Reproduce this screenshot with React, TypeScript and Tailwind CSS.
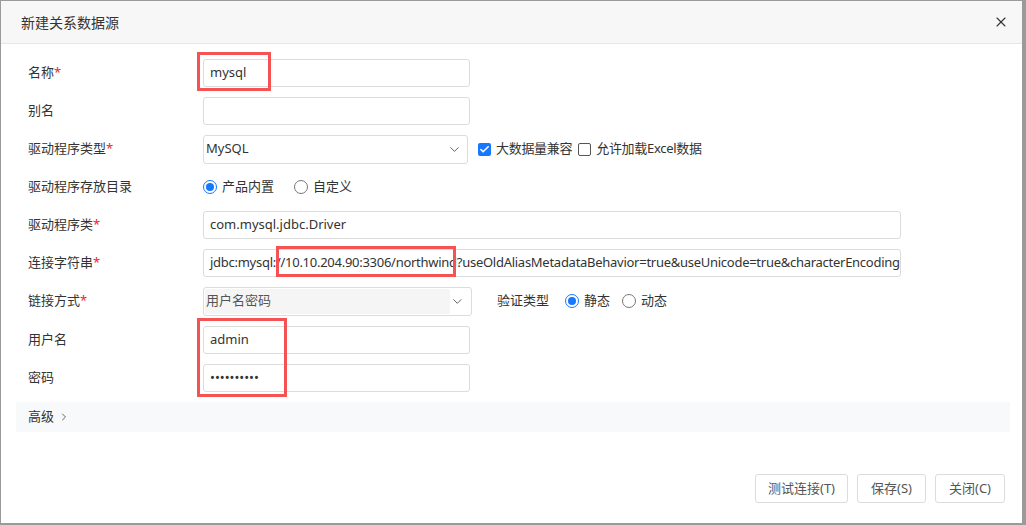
import { ChevronDown, ChevronRight, X, Check } from "lucide-react";

const font = { fontFamily: '"Noto Sans", "Noto Sans CJK SC", sans-serif' };

function Label({ text, required }: { text: string; required?: boolean }) {
  return (
    <div className="w-[187px] shrink-0 pl-[12px] text-[13px] text-[#333]">
      {text}
      {required && <span className="text-[#f5222d]">*</span>}
    </div>
  );
}

function Input({ value, className = "w-[267px]" }: { value?: string; className?: string }) {
  return (
    <div
      className={`h-[28px] ${className} flex items-center overflow-hidden whitespace-nowrap rounded-[3px] border border-[#dcdcdc] bg-white px-[6px] text-[13px] text-[#333]`}
    >
      {value}
    </div>
  );
}

function Radio({ checked, label }: { checked?: boolean; label: string }) {
  return (
    <div className="flex items-center gap-[5px] text-[13px] text-[#333]">
      <span
        className={`flex h-[14px] w-[14px] items-center justify-center rounded-full border ${
          checked ? "border-[#1677ff]" : "border-[#777]"
        } bg-white`}
      >
        {checked && <span className="h-[8px] w-[8px] rounded-full bg-[#1677ff]" />}
      </span>
      {label}
    </div>
  );
}

function Checkbox({ checked, label }: { checked?: boolean; label: string }) {
  return (
    <div className="flex items-center gap-[5px] text-[13px] tracking-[-0.3px] text-[#333]">
      <span
        className={`flex h-[13px] w-[13px] items-center justify-center rounded-[2px] ${
          checked ? "bg-[#1677ff]" : "border border-[#555] bg-white"
        }`}
      >
        {checked && <Check className="h-[11px] w-[11px] text-white" strokeWidth={3.5} />}
      </span>
      {label}
    </div>
  );
}

function Row({ children }: { children: React.ReactNode }) {
  return <div className="flex h-[38px] items-center">{children}</div>;
}

export default function App() {
  const conn =
    "jdbc:mysql://10.10.204.90:3306/northwind?useOldAliasMetadataBehavior=true&useUnicode=true&characterEncoding=utf8";

  return (
    <div className="relative h-[525px] w-[1026px] overflow-hidden bg-[#9a9a9a]" style={font}>
      <div className="h-[524px] w-[1023px] border border-[#9a9a9a] bg-white">
        {/* header */}
        <div className="flex h-[43px] items-center justify-between border-b border-[#e6e6e6] bg-[#f7f7f7] pl-[20px] pr-[13px]">
          <span className="text-[14px] text-[#333]">新建关系数据源</span>
          <X className="h-[16px] w-[16px] text-[#333]" strokeWidth={1.6} />
        </div>

        <div className="pl-[15px] pr-[12px] pt-[10px]">
          <Row>
            <Label text="名称" required />
            <Input value="mysql" />
          </Row>
          <Row>
            <Label text="别名" />
            <Input />
          </Row>
          <Row>
            <Label text="驱动程序类型" required />
            <div className="flex h-[29px] w-[265px] items-center justify-between rounded-[3px] border border-[#dcdcdc] bg-white pl-[2px] pr-[5px] text-[13px] text-[#333]">
              MySQL
              <ChevronDown className="h-[15px] w-[15px] text-[#555]" strokeWidth={1.5} />
            </div>
            <div className="ml-[10px] flex items-center gap-[6px]">
              <Checkbox checked label="大数据量兼容" />
              <Checkbox label="允许加载Excel数据" />
            </div>
          </Row>
          <Row>
            <Label text="驱动程序存放目录" />
            <div className="flex items-center gap-[20px]">
              <Radio checked label="产品内置" />
              <Radio label="自定义" />
            </div>
          </Row>
          <Row>
            <Label text="驱动程序类" required />
            <Input value="com.mysql.jdbc.Driver" className="w-[698px]" />
          </Row>
          <Row>
            <Label text="连接字符串" required />
            <Input value={conn} className="w-[698px] tracking-[-0.27px]" />
          </Row>
          <Row>
            <Label text="链接方式" required />
            <div className="flex h-[29px] w-[269px] items-center justify-between rounded-[3px] border border-[#dcdcdc] bg-white p-px pr-[6px] text-[13px] text-[#555]">
              <span className="flex h-full w-[251px] items-center rounded-[2px] bg-[#f5f5f5] pl-[1px]">用户名密码</span>
              <ChevronDown className="h-[15px] w-[15px] text-[#555]" strokeWidth={1.5} />
            </div>
            <div className="ml-[25px] flex items-center gap-[12px] text-[13px] text-[#333]">
              <span className="mr-[4px]">验证类型</span>
              <Radio checked label="静态" />
              <Radio label="动态" />
            </div>
          </Row>
          <div className="flex h-[39px] items-center">
            <Label text="用户名" />
            <Input value="admin" />
          </div>
          <Row>
            <Label text="密码" />
            <Input value="••••••••••" />
          </Row>

          <div className="mt-[5px] flex h-[30px] items-center gap-[4px] bg-[#f8f9fa] pl-[12px] text-[13px] text-[#333]">
            高级
            <ChevronRight className="h-[12px] w-[12px] text-[#555]" strokeWidth={1.8} />
          </div>

          <div className="mt-[42px] flex justify-end gap-[9px] pr-[5px]">
            <button className="h-[29px] w-[93px] rounded-[3px] border border-[#dcdcdc] bg-white text-[13px] text-[#555]">
              测试连接(T)
            </button>
            <button className="h-[29px] w-[69px] rounded-[3px] border border-[#dcdcdc] bg-white text-[13px] text-[#555]">
              保存(S)
            </button>
            <button className="h-[29px] w-[70px] rounded-[3px] border border-[#dcdcdc] bg-white text-[13px] text-[#555]">
              关闭(C)
            </button>
          </div>
        </div>
      </div>

      {/* red annotation boxes */}
      <div className="absolute left-[197px] top-[52px] h-[39px] w-[74px] border-[3px] border-[#f55353]" />
      <div className="absolute left-[276px] top-[246px] h-[31px] w-[180px] border-[3px] border-[#f55353]" />
      <div className="absolute left-[197px] top-[318px] h-[79px] w-[90px] border-[3px] border-[#f55353]" />
    </div>
  );
}
